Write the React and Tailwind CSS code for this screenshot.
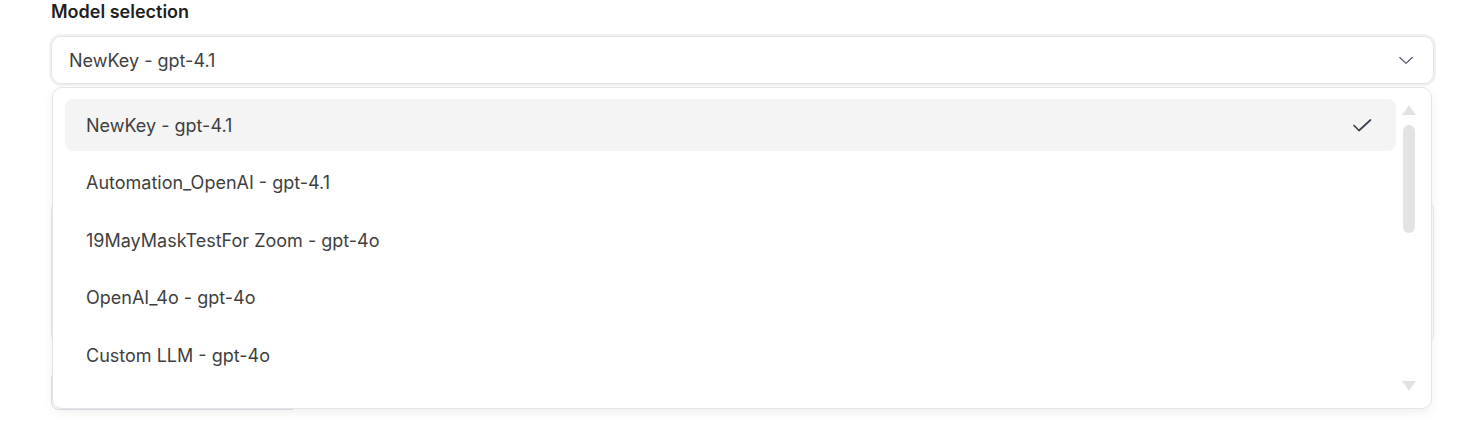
import React, { useState } from 'react';

const models = [
    'NewKey - gpt-4.1',
    'Automation_OpenAI - gpt-4.1',
    '19MayMaskTestFor Zoom - gpt-4o',
    'OpenAI_4o - gpt-4o',
    'Custom LLM - gpt-4o',
];

const Chevron = () => (
    <svg width="20" height="20" viewBox="0 0 24 24" fill="none" stroke="#4b5563" strokeWidth="1.4" strokeLinecap="round" strokeLinejoin="round">
        <path d="M4.5 9l7.5 7 7.5-7" />
    </svg>
);

const Check = () => (
    <svg width="24" height="24" viewBox="0 0 24 24" fill="none" stroke="#374151" strokeWidth="1.7" strokeLinecap="round" strokeLinejoin="round">
        <path d="M4 12.5l5 5L20.5 7" />
    </svg>
);

const App = () => {
    const [selected, setSelected] = useState(models[0]);

    return (
        <main className="w-[1457px] h-[427px] bg-white overflow-hidden" style={{ fontFamily: 'Inter, "Noto Sans", sans-serif' }}>
            <div className="pl-[51px] pr-[23px] pt-[1px]">
                <label className="block text-[18px] font-semibold text-[#1f1f1f] leading-[22px]">Model selection</label>
                <div className="relative mt-[13px]">
                    <button className="w-full h-[48px] flex items-center justify-between pl-[17px] pr-[17px] bg-white border border-[#e5e5e5] rounded-[10px] shadow-[0_0_0_2px_#f1f1f4] text-[18px] text-[#3f3f3f]">
                        <span>{selected}</span>
                        <Chevron />
                    </button>

                    {/* content behind the open menu */}
                    <div className="mt-[116px] h-[145px] border border-[#e8e8ec] rounded-[10px]" />
                    <div className="mt-[25px] w-[248px] h-[40px] border border-[#dde0e6] rounded-[8px]" />

                    <div className="absolute left-[1px] right-[2px] top-[51px] h-[322px] bg-white border border-[#e4e4e7] rounded-[10px] shadow-[0_4px_12px_rgba(0,0,0,0.06)] flex pl-[12px] pt-[11px]">
                        <ul className="flex-1 flex flex-col gap-[5.5px]">
                            {models.map((m) => (
                                <li
                                    key={m}
                                    onClick={() => setSelected(m)}
                                    className={`h-[52px] flex items-center justify-between pl-[21px] pr-[22px] rounded-[8px] text-[18px] text-[#3f3f3f] cursor-pointer ${m === selected ? 'bg-[#f4f4f4]' : ''}`}
                                >
                                    <span>{m}</span>
                                    {m === selected && <Check />}
                                </li>
                            ))}
                        </ul>
                        <div className="w-[12px] ml-[7px] mr-[16px] flex flex-col items-center">
                            <div className="mt-[6px] w-0 h-0 border-l-[7px] border-r-[7px] border-b-[10px] border-l-transparent border-r-transparent border-b-[#e3e3e3]" />
                            <div className="mt-[10px] w-[12px] h-[108px] rounded-full bg-[#e3e3e3]" />
                            <div className="mt-auto mb-[17px] w-0 h-0 border-l-[7px] border-r-[7px] border-t-[10px] border-l-transparent border-r-transparent border-t-[#e3e3e3]" />
                        </div>
                    </div>
                </div>
            </div>
        </main>
    );
};

export default App;
